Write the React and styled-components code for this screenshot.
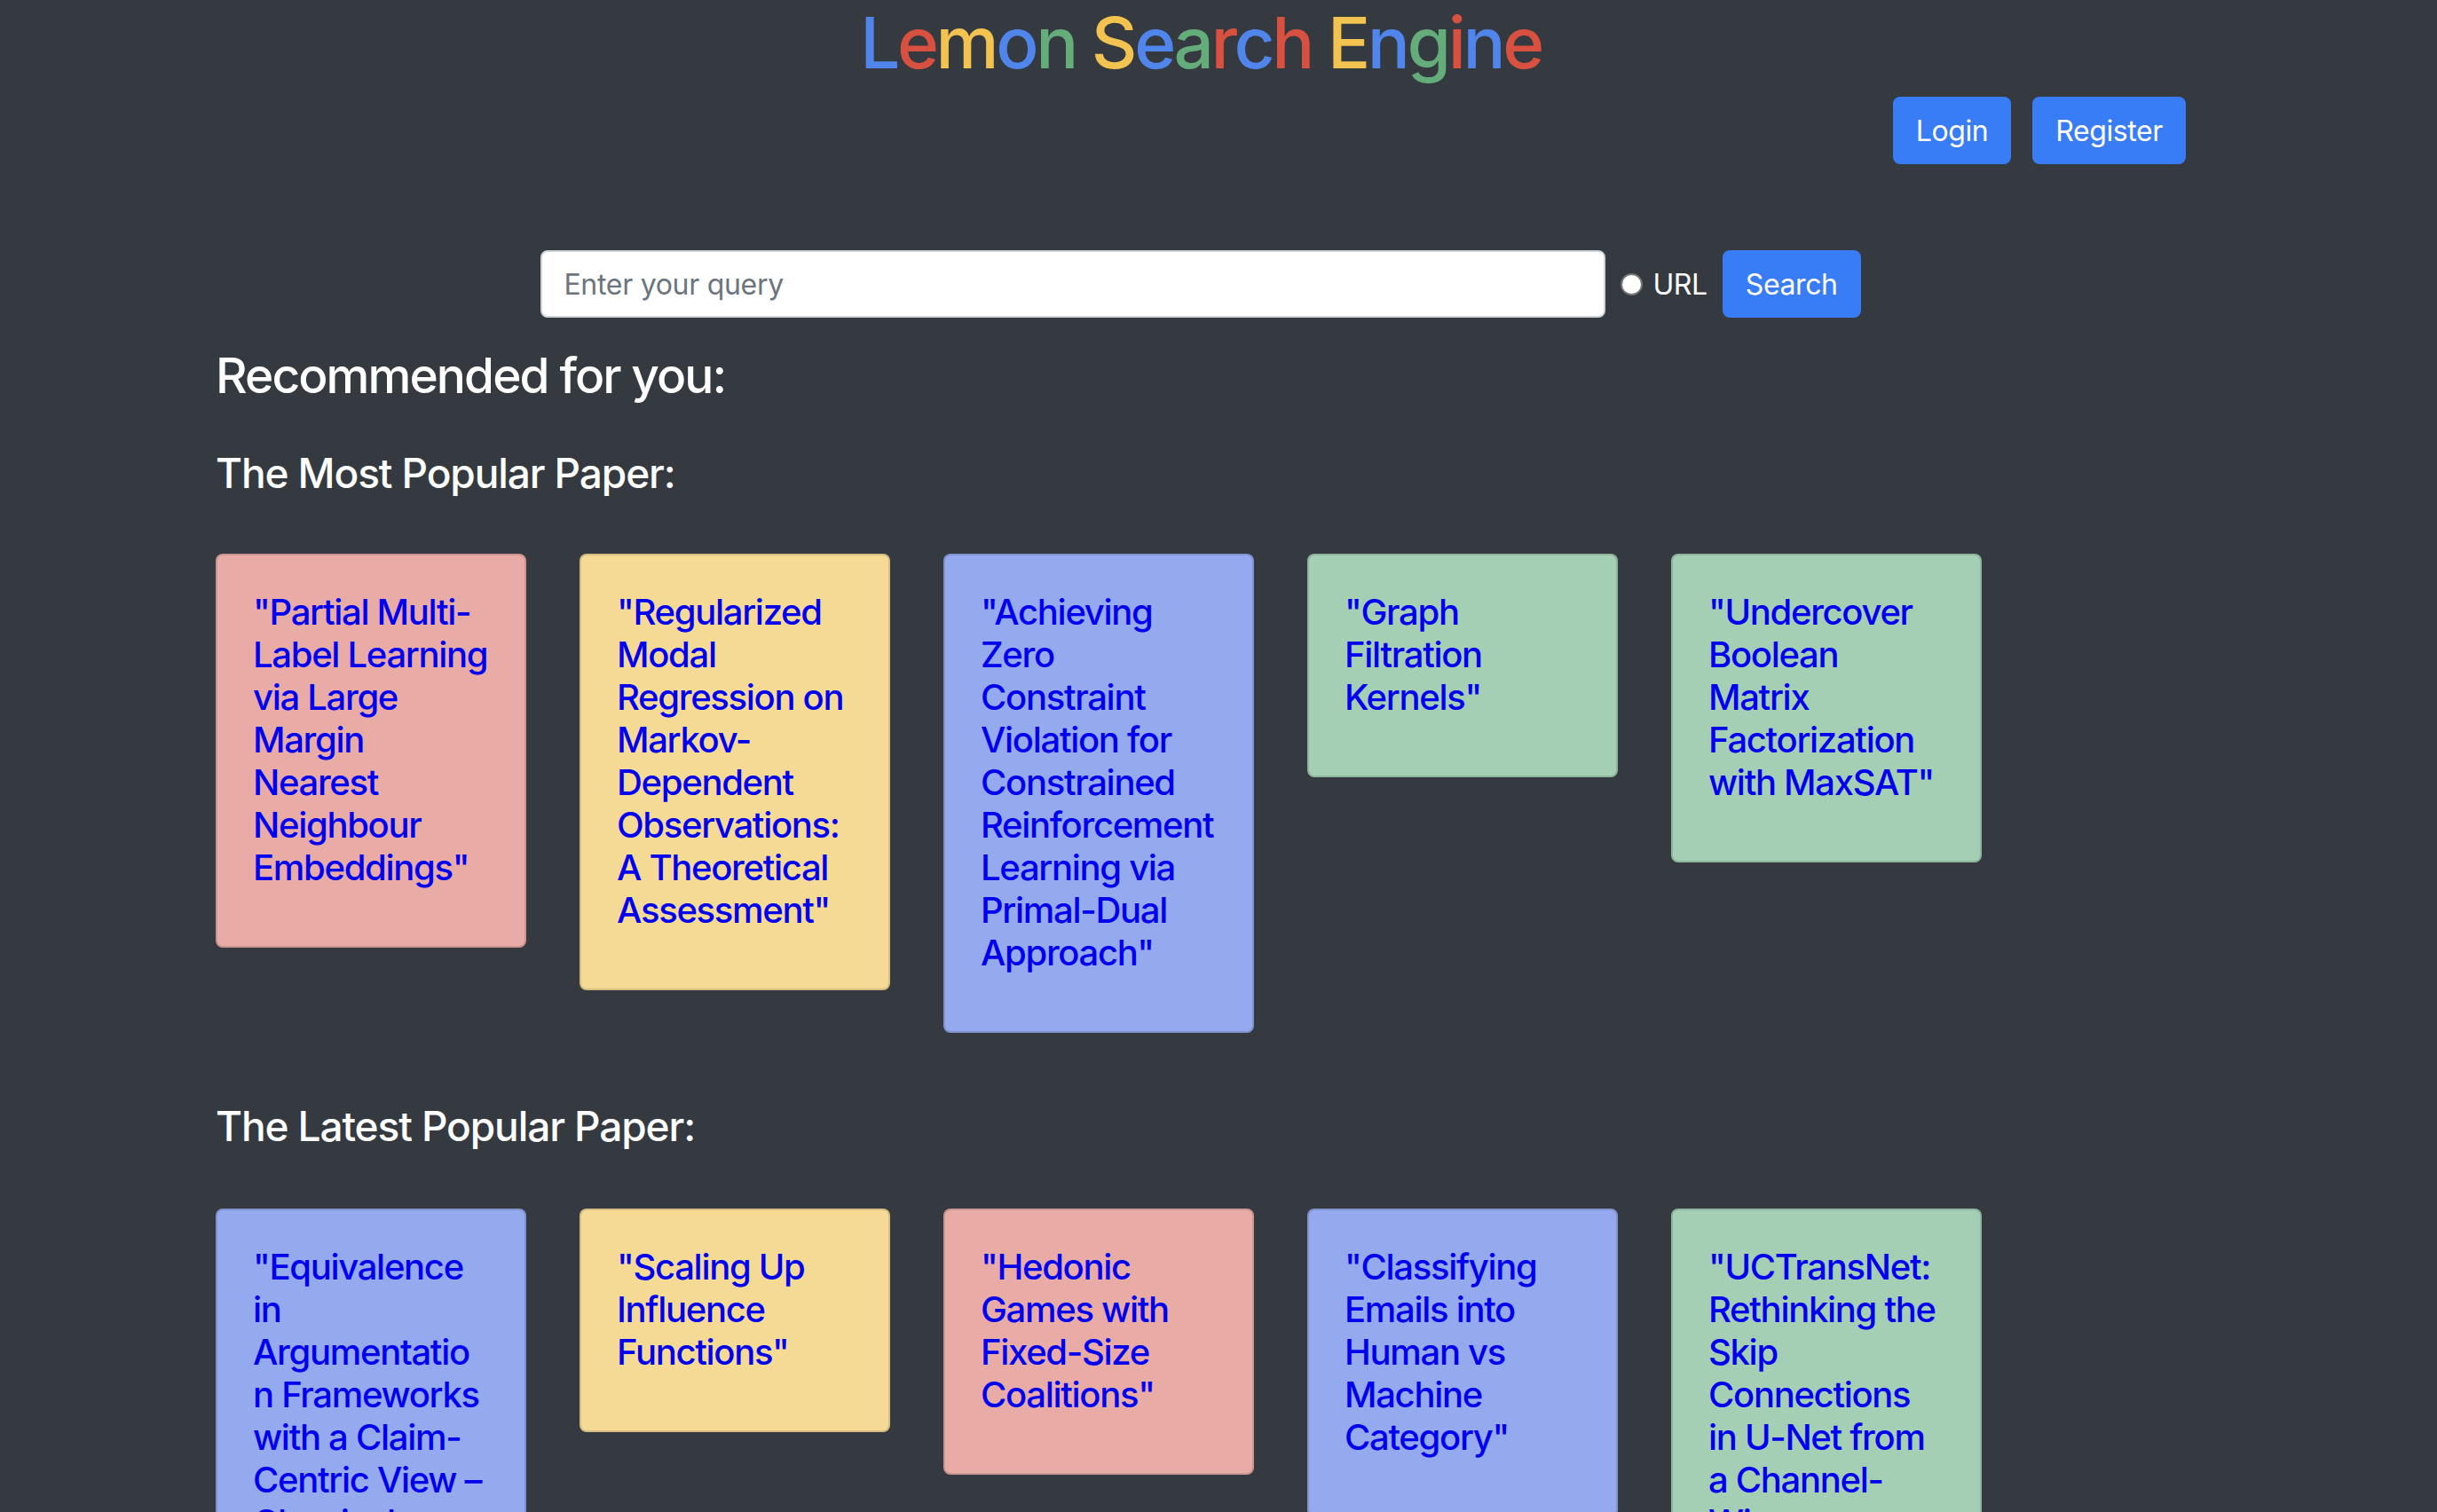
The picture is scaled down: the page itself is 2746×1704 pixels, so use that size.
import React from 'react';
import styled, { createGlobalStyle } from 'styled-components';

const GlobalStyle = createGlobalStyle`
  html, body {
    margin: 0;
    padding: 0;
    background: #343a40;
  }
  body {
    font-family: Inter, "Noto Sans", "Liberation Sans", sans-serif;
    color: #fff;
  }
  * { box-sizing: border-box; }
`;

// colours of the title letters, cycling like the google logo
const BLUE = '#5086ec';
const RED = '#d85040';
const YELLOW = '#f2c350';
const GREEN = '#64ad7a';

const titleLetters = [
  ['L', BLUE], ['e', RED], ['m', YELLOW], ['o', BLUE], ['n', GREEN], [' ', BLUE],
  ['S', YELLOW], ['e', BLUE], ['a', GREEN], ['r', RED], ['c', BLUE], ['h', RED], [' ', BLUE],
  ['E', YELLOW], ['n', BLUE], ['g', GREEN], ['i', RED], ['n', BLUE], ['e', RED],
];

const cardColors = {
  pink: '#e9aba6',
  yellow: '#f5da96',
  blue: '#95a9ef',
  green: '#a4cfb4',
};

const mostPopular = [
  { title: 'Partial Multi-Label Learning via Large Margin Nearest Neighbour Embeddings', color: 'pink' },
  { title: 'Regularized Modal Regression on Markov-Dependent Observations: A Theoretical Assessment', color: 'yellow' },
  { title: 'Achieving Zero Constraint Violation for Constrained Reinforcement Learning via Primal-Dual Approach', color: 'blue' },
  { title: 'Graph Filtration Kernels', color: 'green' },
  { title: 'Undercover Boolean Matrix Factorization with MaxSAT', color: 'green' },
];

const latestPopular = [
  { title: 'Equivalence in Argumentation Frameworks with a Claim-Centric View – Classical Results with Novel Ingredients', color: 'blue' },
  { title: 'Scaling Up Influence Functions', color: 'yellow' },
  { title: 'Hedonic Games with Fixed-Size Coalitions', color: 'pink' },
  { title: 'Classifying Emails into Human vs Machine Category', color: 'blue' },
  { title: 'UCTransNet: Rethinking the Skip Connections in U-Net from a Channel-Wise Perspective with Transformer', color: 'green' },
];

// the original had a scrollbar, so everything sits a little left of centre
const Page = styled.div`
  padding-right: 40px;
  min-height: 100vh;
`;

const Title = styled.h1`
  margin: 0;
  text-align: center;
  font-size: 80px;
  line-height: 96px;
  font-weight: 500;
  letter-spacing: -3.4px;
`;

const Container = styled.div`
  width: 2280px;
  margin: 0 auto;
  padding: 0 30px;
`;

const AuthBar = styled.div`
  display: flex;
  justify-content: flex-end;
  gap: 24px;
  margin-top: 13px;
`;

const Button = styled.button`
  height: 76px;
  padding: 0 24px;
  border: 2px solid #387cf6;
  border-radius: 8px;
  background: #387cf6;
  color: #fff;
  font-family: inherit;
  font-size: 32px;
  font-weight: 400;
  letter-spacing: -0.4px;
  cursor: pointer;
`;

const SearchRow = styled.div`
  display: flex;
  justify-content: center;
  align-items: center;
  margin-top: 97px;
`;

const QueryInput = styled.input`
  width: 1200px;
  height: 76px;
  padding: 0 24px;
  border: 2px solid #ced4da;
  border-radius: 8px;
  background: #fff;
  font-family: inherit;
  font-size: 32px;
  letter-spacing: -0.3px;
  color: #495057;
  outline: none;

  &::placeholder {
    color: #6c757d;
  }
`;

const Radio = styled.input`
  appearance: none;
  width: 25px;
  height: 25px;
  margin: 0 0 0 17px;
  border: 2px solid #767676;
  border-radius: 50%;
  background: #fff;
`;

const RadioLabel = styled.label`
  margin-left: 11px;
  margin-right: 17px;
  font-size: 32px;
  letter-spacing: -0.4px;
  color: #fff;
`;

const Heading = styled.h2`
  margin: ${(p) => p.$top}px 0 0;
  font-size: ${(p) => p.$size}px;
  line-height: 1.2;
  font-weight: 500;
  letter-spacing: ${(p) => p.$track}px;
`;

const CardRow = styled.div`
  display: flex;
  align-items: flex-start;
  gap: 60px;
  margin-top: ${(p) => p.$top}px;
`;

const Card = styled.div`
  width: 350px;
  flex: none;
  background: ${(p) => cardColors[p.$color]};
  border: 2px solid rgba(0, 0, 0, 0.125);
  border-radius: 8px;
  overflow-wrap: break-word;
`;

const CardBody = styled.div`
  padding: 40px;
`;

const CardTitle = styled.h5`
  margin: 0 0 24px;
  font-size: 40px;
  line-height: 48px;
  font-weight: 500;
  letter-spacing: -1.3px;
`;

const PaperLink = styled.a`
  color: #0000ee;
  text-decoration: none;
`;

function PaperCard({ paper }) {
  return (
    <Card $color={paper.color}>
      <CardBody>
        <CardTitle>
          <PaperLink href="#">"{paper.title}"</PaperLink>
        </CardTitle>
      </CardBody>
    </Card>
  );
}

export default function App() {
  return (
    <Page>
      <GlobalStyle />
      <Title>
        {titleLetters.map(([ch, color], i) => (
          <span key={i} style={{ color }}>{ch}</span>
        ))}
      </Title>
      <Container>
        <AuthBar>
          <Button>Login</Button>
          <Button>Register</Button>
        </AuthBar>
        <SearchRow>
          <QueryInput placeholder="Enter your query" />
          <Radio type="radio" id="url" />
          <RadioLabel htmlFor="url">URL</RadioLabel>
          <Button>Search</Button>
        </SearchRow>

        <Heading $top={32} $size={55} $track={-1.9}>Recommended for you:</Heading>

        <Heading as="h3" $top={50} $size={46} $track={-1.1}>The Most Popular Paper:</Heading>
        <CardRow $top={63}>
          {mostPopular.map((p) => <PaperCard key={p.title} paper={p} />)}
        </CardRow>

        <Heading as="h3" $top={78} $size={46} $track={-1.1}>The Latest Popular Paper:</Heading>
        <CardRow $top={65}>
          {latestPopular.map((p) => <PaperCard key={p.title} paper={p} />)}
        </CardRow>
      </Container>
    </Page>
  );
}
